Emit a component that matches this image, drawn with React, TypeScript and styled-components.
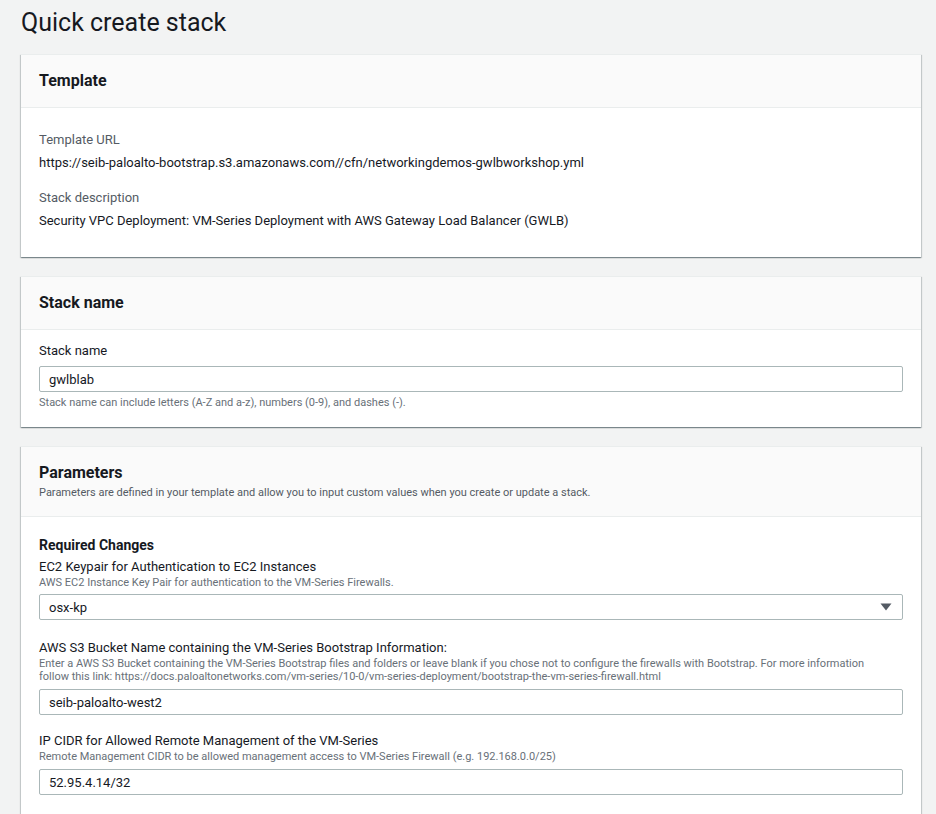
import { FC } from 'react';
import styled, { createGlobalStyle } from 'styled-components';

const GlobalStyle = createGlobalStyle`
  html, body {
    margin: 0;
    padding: 0;
    background: #f2f3f3;
    font-family: Roboto, 'Liberation Sans', Arial, sans-serif;
    color: #16191f;
  }
`;

const Page = styled.div`
  padding: 6px 15px 0 21px;
  height: 814px;
  overflow: hidden;
  box-sizing: border-box;
`;

const Title = styled.h1`
  margin: 0 0 14px;
  font-size: 25px;
  line-height: 34px;
  font-weight: 400;
  color: #16191f;
`;

const Panel = styled.section`
  background: #fff;
  box-shadow: 0 1px 1px 0 rgba(0, 28, 36, 0.3), 1px 1px 1px 0 rgba(0, 28, 36, 0.15),
    -1px 1px 1px 0 rgba(0, 28, 36, 0.15);
  border-top: 1px solid #eaeded;
  margin-bottom: 19px;
`;

const PanelHeader = styled.div<{ $bottom?: number }>`
  background: #fafafa;
  border-bottom: 1px solid #eaeded;
  padding: 14px 18px ${(p) => p.$bottom ?? 14}px;
`;

const PanelTitle = styled.h2`
  margin: 0;
  font-size: 16px;
  line-height: 24px;
  font-weight: 700;
`;

const PanelDesc = styled.p`
  margin: 0;
  font-size: 11px;
  line-height: 15px;
  color: #545b64;
`;

const PanelBody = styled.div<{ $pad?: string }>`
  padding: ${(p) => p.$pad || '18px 18px 20px'};
`;

const Field = styled.div<{ $gap?: number }>`
  margin-bottom: ${(p) => p.$gap ?? 0}px;
`;

const DetailLabel = styled.div`
  font-size: 13px;
  line-height: 22px;
  color: #545b64;
`;

const DetailValue = styled.div`
  font-size: 13px;
  line-height: 23px;
`;

const GroupTitle = styled.div`
  font-size: 14px;
  line-height: 20px;
  font-weight: 700;
  margin-bottom: 3px;
`;

const Label = styled.div`
  font-size: 13px;
  line-height: 18px;
`;

const Hint = styled.div`
  font-size: 11px;
  line-height: 13px;
  color: #687078;
  max-width: 840px;
`;

const Input = styled.div<{ $top?: number; $bottom?: number }>`
  box-sizing: border-box;
  height: 26px;
  margin-top: ${(p) => p.$top ?? 6}px;
  margin-bottom: ${(p) => p.$bottom ?? 0}px;
  border: 1px solid #aab7b8;
  border-radius: 2px;
  padding: 0 9px;
  display: flex;
  align-items: center;
  font-size: 13px;
  background: #fff;
`;

const Select = styled(Input)`
  justify-content: space-between;
  padding-right: 10px;
`;

const Caret = () => (
  <svg width="12" height="8" viewBox="0 0 12 8">
    <path d="M0.5 0.5 H11.5 L6 7.5 Z" fill="#545b64" />
  </svg>
);

const App: FC = () => {
  return (
    <Page>
      <GlobalStyle />
      <Title>Quick create stack</Title>

      <Panel>
        <PanelHeader>
          <PanelTitle>Template</PanelTitle>
        </PanelHeader>
        <PanelBody $pad="21px 18px 25px">
          <Field $gap={13}>
            <DetailLabel>Template URL</DetailLabel>
            <DetailValue>
              https://seib-paloalto-bootstrap.s3.amazonaws.com//cfn/networkingdemos-gwlbworkshop.yml
            </DetailValue>
          </Field>
          <Field>
            <DetailLabel>Stack description</DetailLabel>
            <DetailValue>
              Security VPC Deployment: VM-Series Deployment with AWS Gateway Load Balancer (GWLB)
            </DetailValue>
          </Field>
        </PanelBody>
      </Panel>

      <Panel>
        <PanelHeader>
          <PanelTitle>Stack name</PanelTitle>
        </PanelHeader>
        <PanelBody $pad="12px 18px 18px">
          <Label>Stack name</Label>
          <Input $top={6} $bottom={4}>gwlblab</Input>
          <Hint>Stack name can include letters (A-Z and a-z), numbers (0-9), and dashes (-).</Hint>
        </PanelBody>
      </Panel>

      <Panel>
        <PanelHeader $bottom={16}>
          <PanelTitle>Parameters</PanelTitle>
          <PanelDesc>
            Parameters are defined in your template and allow you to input custom values when you create
            or update a stack.
          </PanelDesc>
        </PanelHeader>
        <PanelBody $pad="18px 18px 20px">
          <GroupTitle>Required Changes</GroupTitle>
          <Field $gap={19}>
            <Label>EC2 Keypair for Authentication to EC2 Instances</Label>
            <Hint>AWS EC2 Instance Key Pair for authentication to the VM-Series Firewalls.</Hint>
            <Select $top={5}>
              osx-kp
              <Caret />
            </Select>
          </Field>
          <Field $gap={17}>
            <Label>AWS S3 Bucket Name containing the VM-Series Bootstrap Information:</Label>
            <Hint>
              Enter a AWS S3 Bucket containing the VM-Series Bootstrap files and folders or leave blank if you
              chose not to configure the firewalls with Bootstrap. For more information follow this link:
              https://docs.paloaltonetworks.com/vm-series/10-0/vm-series-deployment/bootstrap-the-vm-series-firewall.html
            </Hint>
            <Input>seib-paloalto-west2</Input>
          </Field>
          <Field $gap={17}>
            <Label>IP CIDR for Allowed Remote Management of the VM-Series</Label>
            <Hint>Remote Management CIDR to be allowed management access to VM-Series Firewall (e.g. 192.168.0.0/25)</Hint>
            <Input>52.95.4.14/32</Input>
          </Field>
          <Field>
            <Label>VPC CIDR</Label>
          </Field>
        </PanelBody>
      </Panel>
    </Page>
  );
};

export default App;
